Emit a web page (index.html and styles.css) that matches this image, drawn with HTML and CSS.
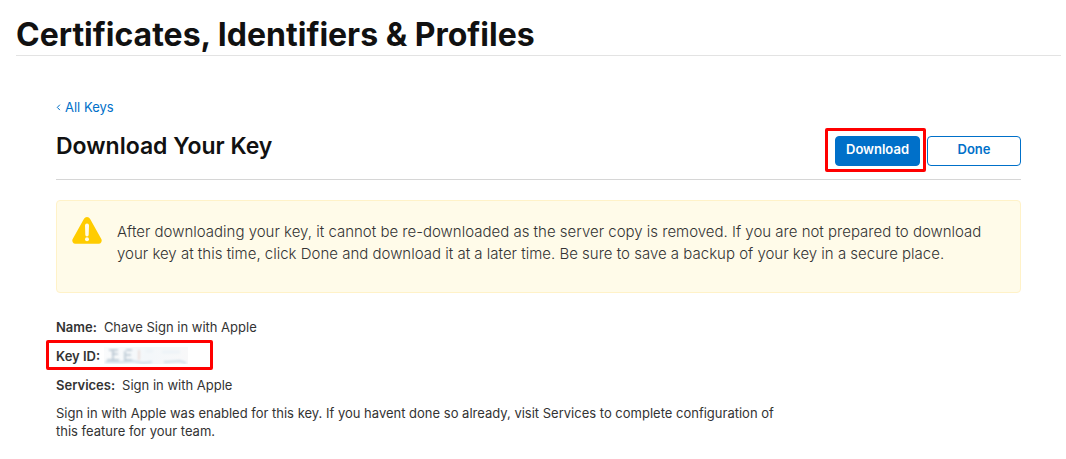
FILE: index.html
```html
<!DOCTYPE html>
<html lang="en">
<head>
<meta charset="utf-8">
<title>Certificates, Identifiers &amp; Profiles</title>
<link rel="stylesheet" href="styles.css">
</head>
<body>
<header class="page-header"><h1>Certificates, Identifiers &amp; Profiles</h1></header>
<main class="content">
  <a class="back" href="#"><svg class="chevron" viewBox="0 0 5 8" aria-hidden="true"><path d="M3.9 1.7 1.3 4.4l2.6 2.7"/></svg>All Keys</a>
  <div class="title-row">
    <h2>Download Your Key</h2>
    <div class="actions">
      <span class="marker marker-button"><button class="btn btn-primary" type="button">Download</button></span>
      <button class="btn btn-outline" type="button">Done</button>
    </div>
  </div>
  <div class="notice" role="note">
    <svg class="warning" viewBox="0 0 30 27" aria-hidden="true"><path class="warning-shape" d="M12 1.8a3.4 3.4 0 0 1 6 0l11.3 20.3a3.1 3.1 0 0 1-2.7 4.6H3.4a3.1 3.1 0 0 1-2.7-4.6z"/><path class="warning-mark" d="M13 8.5a2 2 0 0 1 4 0l-.3 9.3a1.7 1.7 0 0 1-3.4 0z"/><circle class="warning-mark" cx="15" cy="22.3" r="2"/></svg>
    <p>After downloading your key, it cannot be re-downloaded as the server copy is removed. If you are not prepared to download your key at this time, click Done and download it at a later time. Be sure to save a backup of your key in a secure place.</p>
  </div>
  <dl class="details">
    <div class="detail"><dt>Name:</dt><dd>Chave Sign in with Apple</dd></div>
    <div class="detail detail-key"><dt>Key ID:</dt><dd>
      <svg class="redacted" viewBox="0 0 84 17" role="img" aria-label="Hidden key">
        <defs>
          <filter id="smudge"><feGaussianBlur stdDeviation="1"/></filter>
          <linearGradient id="fade"><stop offset="0" stop-color="#fafbfc"/><stop offset=".5" stop-color="#f3f7fa"/><stop offset="1" stop-color="#f8f8f9"/></linearGradient>
        </defs>
        <path fill="url(#fade)" d="M0 0h84v17H0z"/>
        <g filter="url(#smudge)" fill="none">
          <path stroke="#b3c2ce" stroke-width="1.5" d="M5 3h9M9 3v10M8 7h6M3 13h12M22 3h6M21 4v9h7M22 8h5"/>
          <path stroke="#ecdfdc" stroke-width="2" d="M35 3v10"/>
          <path stroke="#c6d8e4" stroke-width="1.5" d="M1 15h16l12-1 10 2 9-1M60 15l16-1 6 2"/>
          <path stroke="#edf3f7" stroke-width="3" d="M42 4h7M58 5h18"/>
        </g>
      </svg></dd></div>
    <div class="detail"><dt>Services:</dt><dd>Sign in with Apple</dd></div>
  </dl>
  <p class="footnote">Sign in with Apple was enabled for this key. If you havent done so already, visit Services to complete configuration of this feature for your team.</p>
</main>
</body>
</html>
```
FILE: styles.css
```css
*, ::after { box-sizing: border-box; }
body { margin: 0; background: #fff; color: #333; font: 13px/18px Inter, sans-serif; font-optical-sizing: none; }
h1, h2, p, dl, dd { margin: 0; }
h1, h2 { color: #111; }
.page-header { margin: 0 5px 0 16px; padding-top: 14px; border-bottom: 1px solid #e3e3e3; }
h1 { font-size: 32px; line-height: 41px; font-weight: 700; }
.content { margin: 42px 45px 0 56px; }
.back { display: flex; align-items: center; gap: 4px; color: #0070c9; text-decoration: none; }
.chevron { width: 5px; height: 8px; fill: none; stroke: currentColor; }
.title-row { display: flex; justify-content: space-between; align-items: flex-start; padding: 12px 0 7px; border-bottom: 1px solid #d6d6d6; }
h2 { font-size: 23px; line-height: 36px; font-weight: 600; }
.actions { display: flex; align-items: flex-end; gap: 1px; }
.marker { border: 3px solid #ff0000; border-radius: 2px; }
.marker-button { padding: 5px 3px 3px 7px; }
.btn { display: block; height: 30px; border: 1px solid #0070c9; border-radius: 4px; font: 600 13px/18px Inter, sans-serif; padding: 0 0 4px; }
.btn-primary { width: 85px; background: #0070c9; color: #fff; }
.btn-outline { width: 94px; margin-bottom: 6px; background: #fff; color: #0070c9; }
.notice { display: flex; gap: 15px; margin-top: 20px; padding: 16px 30px 27px 15px; background: #fffbe9; border: 1px solid #fff2c8; border-radius: 4px; }
.warning { flex: none; width: 30px; height: 27px; }
.warning-shape { fill: #ffcc00; }
.warning-mark { fill: #fffbe9; }
.notice p { padding-top: 4px; font-size: 15px; line-height: 22px; font-weight: 300; }
.details { margin-top: 25px; }
.detail { display: flex; gap: 7px; margin-bottom: 11px; }
.detail-key { position: relative; gap: 4px; }
.detail-key::after { content: ""; position: absolute; top: -7px; left: -10px; width: 167px; height: 30px; border: 3px solid #ff0000; border-radius: 2px; }
dt { font-weight: 600; }
.footnote { max-width: 720px; margin-top: -1px; }
.redacted { display: block; width: 84px; height: 17px; }
```
